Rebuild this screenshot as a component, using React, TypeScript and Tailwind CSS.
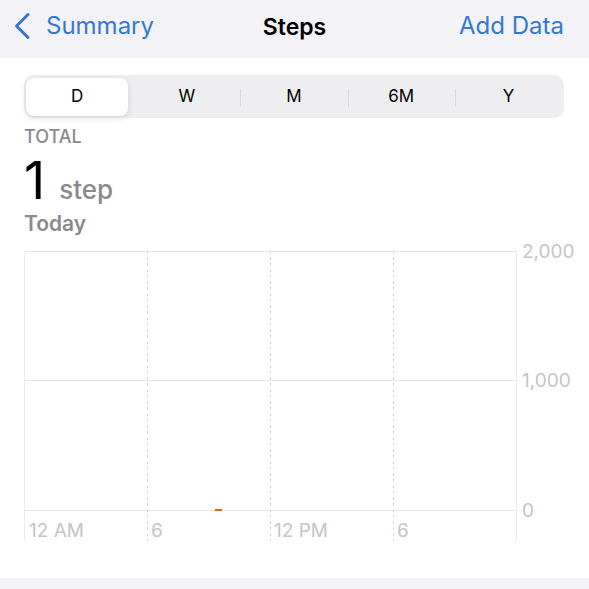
const SEGMENTS = ["D", "W", "M", "6M", "Y"];

const FONT = "font-['Inter','Liberation_Sans',sans-serif]";

// chart coordinates are relative to the chart box (page y 240)
const TOP = 11;
const MID = 140;
const BOTTOM = 270;
const LEFT = 24;
const RIGHT = 516;
const DASHED = [147, 270, 393];

function BackChevron() {
  return (
    <svg width={18} height={28} viewBox="0 0 18 28" fill="none">
      <path d="M15 2.5 3.5 14 15 25.5" stroke="currentColor" strokeWidth={3} strokeLinecap="round" strokeLinejoin="round" />
    </svg>
  );
}

function StepsChart() {
  return (
    <svg width={589} height={305} className="block shrink-0">
      {/* horizontal grid */}
      {[TOP, MID, BOTTOM].map((y) => (
        <line key={y} x1={LEFT} x2={RIGHT} y1={y + 0.5} y2={y + 0.5} stroke="#e6e6ea" strokeWidth={1} />
      ))}
      {/* left / right borders */}
      <line x1={LEFT + 0.5} x2={LEFT + 0.5} y1={TOP} y2={BOTTOM + 31} stroke="#ececef" />
      <line x1={RIGHT + 0.5} x2={RIGHT + 0.5} y1={TOP} y2={BOTTOM + 31} stroke="#ececef" />
      {/* dashed verticals */}
      {DASHED.map((x) => (
        <line
          key={x}
          x1={x + 0.5}
          x2={x + 0.5}
          y1={TOP}
          y2={BOTTOM + 31}
          stroke="#d6d6da"
          strokeDasharray="3 3"
        />
      ))}
      {/* the single step */}
      <rect x={215} y={BOTTOM - 1} width={7} height={2} fill="#d2691e" />

      <g fill="#c4c4c8" fontSize={19} fontFamily="Inter, 'Liberation Sans', sans-serif">
        <text x={522} y={TOP + 7}>2,000</text>
        <text x={522} y={MID + 7}>1,000</text>
        <text x={522} y={BOTTOM + 7}>0</text>
        <text x={29} y={BOTTOM + 27}>12 AM</text>
        <text x={151} y={BOTTOM + 27}>6</text>
        <text x={274} y={BOTTOM + 27}>12 PM</text>
        <text x={397} y={BOTTOM + 27}>6</text>
      </g>
    </svg>
  );
}

export default function App() {
  return (
    <div className={`w-[589px] h-[589px] bg-white flex flex-col overflow-hidden ${FONT}`}>
      {/* Nav bar */}
      <div className="h-[58px] bg-[#f2f2f7] flex items-center justify-between pl-[13px] pr-[25px] pb-[6px] relative shrink-0">
        <div className="flex items-center text-[#3478d4]">
          <BackChevron />
          <span className="text-[24px] ml-[15px]">Summary</span>
        </div>
        <span className="absolute left-1/2 -translate-x-1/2 top-[10px] text-[23px] font-semibold text-black">
          Steps
        </span>
        <span className="text-[24px] text-[#3478d4]">Add Data</span>
      </div>

      {/* Content */}
      <div className="flex flex-col px-[24px] pt-[17px] shrink-0">
        <div className="h-[43px] w-[540px] rounded-[10px] bg-[#eeeef0] p-[2px] flex items-center">
          {SEGMENTS.map((s, i) => (
            <div key={s} className="flex-1 h-full flex items-center justify-center relative">
              {i > 1 && <div className="absolute left-0 top-[12px] h-[18px] w-px bg-[#d8d8dc]" />}
              {i === 0 ? (
                <div className="w-[102px] h-[38px] -ml-[5px] rounded-[8px] bg-white shadow-[0_2px_6px_rgba(0,0,0,0.12)] flex items-center justify-center text-[17px] text-black">
                  {s}
                </div>
              ) : (
                <span className="text-[17px] text-black">{s}</span>
              )}
            </div>
          ))}
        </div>

        <div className="mt-[7px] text-[18px] text-[#8a8a8e] font-medium leading-[24px]">TOTAL</div>
        <div className="flex items-baseline leading-none mt-[6px]">
          <span className="text-[52px] text-black">1</span>
          <span className="text-[26px] text-[#8a8a8e] font-medium ml-[14px]">step</span>
        </div>
        <div className="text-[21px] text-[#8a8a8e] font-semibold leading-[26px] mt-[4px]">Today</div>
      </div>

      <div className="mt-[3px]">
        <StepsChart />
      </div>

      <div className="flex-1" />
      <div className="h-[11px] bg-[#f2f2f7] shrink-0" />
    </div>
  );
}
